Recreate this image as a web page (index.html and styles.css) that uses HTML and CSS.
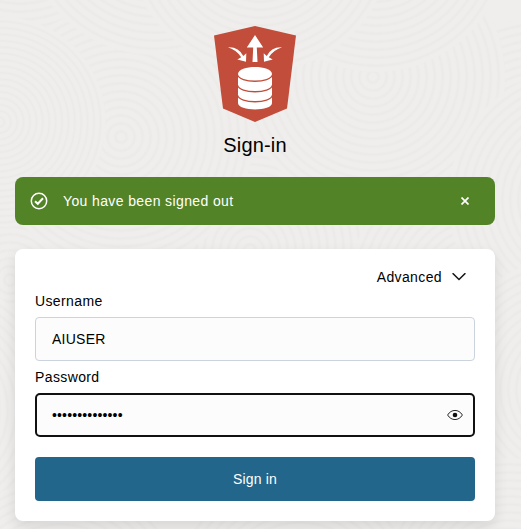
FILE: index.html
```html
<!DOCTYPE html>
<html lang="en">
<head>
<meta charset="utf-8">
<title>Sign-in</title>
<link rel="stylesheet" href="styles.css">
</head>
<body>
<svg class="backdrop" width="521" height="529" aria-hidden="true">
  <defs>
    <radialGradient id="rings" gradientUnits="userSpaceOnUse" cx="0" cy="0" r="8" spreadMethod="repeat">
      <stop offset="0" stop-color="#efeeed"/><stop offset=".4" stop-color="#efeeed"/><stop offset=".7" stop-color="#ebeae9"/><stop offset="1" stop-color="#efeeed"/>
    </radialGradient>
    <circle id="disc" r="132" fill="url(#rings)"/>
  </defs>
  <use href="#disc" x="540" y="150"/>
  <use href="#disc" x="20" y="-90"/>
  <use href="#disc" x="250" y="250"/>
  <use href="#disc" x="480" y="290"/>
  <use href="#disc" x="10" y="280"/>
  <use href="#disc" x="121" y="137"/>
  <use href="#disc" transform="translate(0 122) scale(.8)"/>
  <use href="#disc" x="373" y="77"/>
  <use href="#disc" x="376" y="-60"/>
  <use href="#disc" transform="translate(155 -77)"/>
  <use href="#disc" transform="translate(260 -60)"/>
  <use href="#disc" x="580" y="200"/>
  <use href="#disc" x="570" y="390"/>
  <use href="#disc" x="-70" y="410"/>
  <use href="#disc" x="60" y="610"/>
  <use href="#disc" x="300" y="600"/>
  <use href="#disc" x="510" y="590"/>
</svg>
<main class="page">
  <header class="brand">
    <svg class="logo" width="82" height="96" viewBox="0 0 82 96">
      <path fill="#c14d3a" d="M41 0 82 9.500 73 82.500 41 96 9 82.500 0 9.500Z"/>
      <g fill="#fff">
        <path d="M41 9 49.200 21.500H42.800L43.500 36H38.500L39.200 21.500H32.800Z"/>
        <path id="sweep" d="M14 21.300Q24.500 20.600 29.300 30L32.300 27.300 32 35.800 23.300 33.400 27.200 31.300Q22.500 24 14 21.300Z"/>
        <use href="#sweep" transform="matrix(-1 0 0 1 82 0)"/>
        <path d="M24 48C24 38.500 58 38.500 58 48V77C58 85.500 24 85.500 24 77Z"/>
      </g>
      <path fill="none" stroke="#c14d3a" stroke-width="1.300" d="M23.500 48.500C25 57.500 57 57.500 58.500 48.500M23.500 59C25 68 57 68 58.500 59M23.500 69C25 78 57 78 58.500 69"/>
    </svg>
    <h1>Sign-in</h1>
  </header>
  <div class="notice" role="status">
    <svg width="18" height="18" viewBox="0 0 18 18" fill="none" stroke="#fff"><circle cx="9" cy="9" r="7.700" stroke-width="1.500"/><path stroke-width="2" d="M5 9.200 7.800 11.800 13 6.300"/></svg>
    <span>You have been signed out</span>
    <button class="close" type="button" aria-label="Close"><svg width="8" height="8" viewBox="0 0 8 8" stroke="#fff" stroke-width="1.700"><path d="M.5.5 7.500 7.500M7.500.5.5 7.500"/></svg></button>
  </div>
  <form class="card">
    <div class="advanced">Advanced<svg width="14" height="8" viewBox="0 0 14 8" fill="none" stroke="#161513" stroke-width="1.500"><path d="M.6.2 7 6.500 13.400.2"/></svg></div>
    <label for="user">Username</label>
    <div class="field"><input id="user" type="text" value="AIUSER"></div>
    <label for="pass">Password</label>
    <div class="field focused">
      <span class="dots" id="pass">••••••••••••••</span>
      <svg width="16" height="12" viewBox="0 0 16 12"><path fill="none" stroke="#161513" stroke-width=".9" d="M.6 6C4.200-.1 11.800-.1 15.400 6 11.800 12.100 4.200 12.100.6 6Z"/><circle cx="8" cy="6" r="2.300" fill="#111"/></svg>
    </div>
    <button class="submit" type="button">Sign in</button>
  </form>
</main>
</body>
</html>
```
FILE: styles.css
```css
* { box-sizing: border-box; }
body {
  margin: 0;
  height: 529px;
  overflow: hidden;
  background: #efeeed;
  color: #000;
  font: 14px/20px "Liberation Sans", Arial, sans-serif;
  letter-spacing: .38px;
}
svg { display: block; flex: none; }
.backdrop { position: absolute; top: 0; left: 0; z-index: -1; }
.page { width: 480px; margin-left: 15px; padding-top: 26px; }
.brand { display: flex; flex-direction: column; align-items: center; height: 151px; }
h1 { margin: 9px 0 0; font-size: 20px; line-height: 28px; font-weight: 400; letter-spacing: .15px; }
.notice {
  display: flex;
  align-items: center;
  height: 48px;
  padding: 0 26px 0 15px;
  border-radius: 8px;
  background: #538327;
  color: #fff;
}
.notice span { margin-left: 15px; }
button { border: 0; color: #fff; font: inherit; letter-spacing: .2px; }
.close { margin-left: auto; padding: 0; background: none; }
.card {
  display: flex;
  flex-direction: column;
  height: 272px;
  margin-top: 24px;
  padding: 18px 20px 20px;
  border-radius: 8px;
  background: #fff;
  box-shadow: 0 6px 14px rgba(0, 0, 0, .1);
}
.advanced { display: flex; align-items: center; align-self: flex-end; gap: 10px; height: 20px; margin-right: 9px; }
label { height: 20px; margin-top: 4px; }
.field {
  display: flex;
  align-items: center;
  height: 44px;
  margin: 6px 0 2px;
  padding: 0 16px;
  border: 1px solid #cbd3df;
  border-radius: 4px;
  background: #fcfcfc;
}
.focused { padding: 0 10px 0 15px; border: 2px solid #111; border-radius: 5px; justify-content: space-between; }
input { width: 100%; padding: 0; border: 0; outline: 0; background: none; color: inherit; font: inherit; letter-spacing: .25px; }
.dots { letter-spacing: .15px; }
.submit { height: 44px; margin-top: 18px; border-radius: 4px; background: #22668b; }
```
